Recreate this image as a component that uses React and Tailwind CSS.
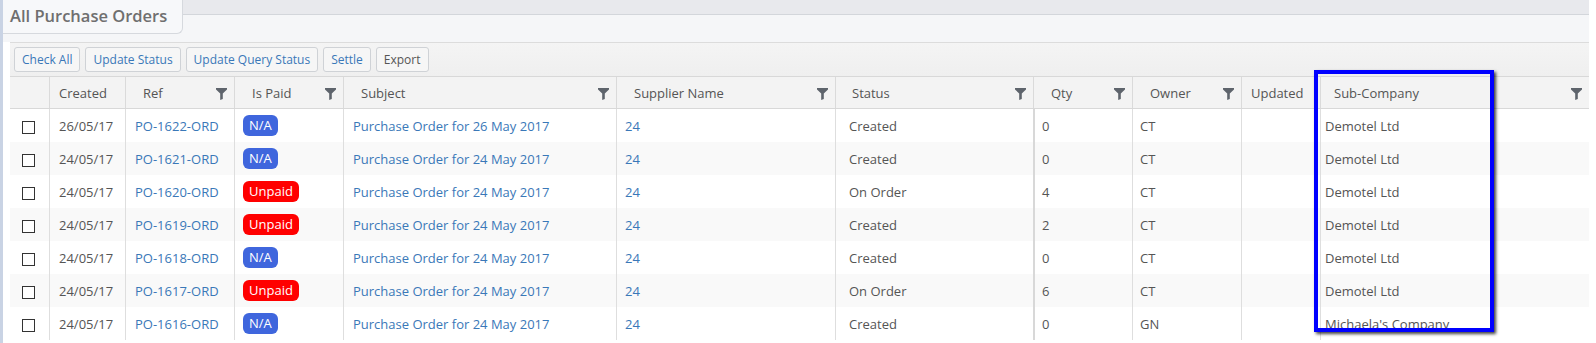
import React from "react";

const FONT = { fontFamily: '"Open Sans", "Noto Sans", Arial, sans-serif' };

function Funnel() {
  return (
    <svg width="11" height="12" viewBox="0 0 11 12" className="shrink-0">
      <path d="M0 0 H11 V1.5 L6.8 5.5 V11 L4.2 12 V5.5 L0 1.5 Z" fill="#5e646c" />
    </svg>
  );
}

const headers = [
  { label: "", pl: "pl-0", filter: false },
  { label: "Created", pl: "pl-[9px]", filter: false },
  { label: "Ref", pl: "pl-[17px]", filter: true },
  { label: "Is Paid", pl: "pl-[17px]", filter: true },
  { label: "Subject", pl: "pl-[17px]", filter: true },
  { label: "Supplier Name", pl: "pl-[17px]", filter: true },
  { label: "Status", pl: "pl-[16px]", filter: true },
  { label: "Qty", pl: "pl-[17px]", filter: true },
  { label: "Owner", pl: "pl-[17px]", filter: true },
  { label: "Updated", pl: "pl-[9px]", filter: false },
  { label: "Sub-Company", pl: "pl-[13px]", filter: true },
];

const rows = [
  ["26/05/17", "PO-1622-ORD", "N/A", "Purchase Order for 26 May 2017", "24", "Created", "0", "CT", "Demotel Ltd"],
  ["24/05/17", "PO-1621-ORD", "N/A", "Purchase Order for 24 May 2017", "24", "Created", "0", "CT", "Demotel Ltd"],
  ["24/05/17", "PO-1620-ORD", "Unpaid", "Purchase Order for 24 May 2017", "24", "On Order", "4", "CT", "Demotel Ltd"],
  ["24/05/17", "PO-1619-ORD", "Unpaid", "Purchase Order for 24 May 2017", "24", "Created", "2", "CT", "Demotel Ltd"],
  ["24/05/17", "PO-1618-ORD", "N/A", "Purchase Order for 24 May 2017", "24", "Created", "0", "CT", "Demotel Ltd"],
  ["24/05/17", "PO-1617-ORD", "Unpaid", "Purchase Order for 24 May 2017", "24", "On Order", "6", "CT", "Demotel Ltd"],
  ["24/05/17", "PO-1616-ORD", "N/A", "Purchase Order for 24 May 2017", "24", "Created", "0", "GN", "Michaela's Company"],
];

const GRID =
  "grid grid-cols-[39px_76px_109px_109px_273px_219px_198px_99px_109px_79px_269px]";

function Btn({ children, dark }) {
  return (
    <button
      className={
        "h-[25px] px-[7px] rounded-[3px] border border-[#cfd2d6] bg-[#f6f6f6] text-[12px] leading-none " +
        (dark ? "text-[#555555]" : "text-[#3a78b8]")
      }
    >
      {children}
    </button>
  );
}

function Badge({ value }) {
  const red = value === "Unpaid";
  return (
    <span
      className={
        "inline-flex items-center h-[21px] px-[6px] rounded-[6px] text-white text-[13px] leading-none " +
        (red ? "bg-[#ff0000]" : "bg-[#3f66dd]")
      }
    >
      {value}
    </span>
  );
}

export default function App() {
  return (
    <div className="relative flex w-[1596px] h-[343px] overflow-hidden bg-white" style={FONT}>
      <div className="w-[3px] shrink-0 bg-[#c9d3e4]" />
      <div className="w-[1586px] shrink-0 flex flex-col">
        {/* title strip */}
        <div className="flex items-start h-[42px] bg-[#f5f6f8]">
          <div className="w-[180px] h-[34px] shrink-0 bg-[#f7f8fa] border-r border-b border-[#d6d9de] rounded-br-[6px] pl-[7px] flex items-center">
            <span className="text-[16.5px] font-semibold text-[#6f6f6f] leading-none">All Purchase Orders</span>
          </div>
          <div className="flex-1 h-[15px] bg-[#e8e9ed] border-b border-[#d3d6db]" />
        </div>
        {/* content */}
        <div className="pl-[7px] flex flex-col">
          <div className="h-[34px] bg-gradient-to-b from-[#f4f4f4] to-[#efefef] border-t border-[#dcdcdc] flex items-center gap-[5px] pl-[4px]">
            <Btn>Check All</Btn>
            <Btn>Update Status</Btn>
            <Btn>Update Query Status</Btn>
            <Btn>Settle</Btn>
            <Btn dark>Export</Btn>
          </div>
          {/* header */}
          <div className={GRID + " h-[33px] bg-[#f3f3f3] border-t border-b border-[#d8d8d8]"}>
            {headers.map((h, i) => (
              <div
                key={i}
                className={
                  "flex items-center justify-between pr-[7px] pt-[2px] text-[13px] text-[#555555] " +
                  h.pl +
                  (i > 0 ? " border-l border-[#dadada]" : "")
                }
              >
                <span>{h.label}</span>
                {h.filter && <Funnel />}
              </div>
            ))}
          </div>
          {/* rows */}
          {rows.map((r, ri) => (
            <div
              key={ri}
              className={GRID + " h-[33px] text-[13px] text-[#555555] " + (ri % 2 === 1 ? "bg-[#f9f9f9]" : "bg-white")}
            >
              <div className="flex items-center pl-[12px] pt-[3px]">
                <span className="w-[13px] h-[13px] border border-[#333333] bg-white" />
              </div>
              <div className="flex items-center pl-[9px] pt-[2px] border-l border-[#dedede]">{r[0]}</div>
              <div className="flex items-center pl-[9px] pt-[2px] border-l border-[#dedede] text-[#3a78b8]">{r[1]}</div>
              <div className="flex items-center pl-[8px] border-l border-[#dedede]">
                <Badge value={r[2]} />
              </div>
              <div className="flex items-center pl-[9px] pt-[2px] border-l border-[#dedede] text-[#3a78b8]">{r[3]}</div>
              <div className="flex items-center pl-[8px] pt-[2px] border-l border-[#dedede] text-[#3a78b8]">{r[4]}</div>
              <div className="flex items-center pl-[13px] pt-[2px] border-l border-[#dedede]">{r[5]}</div>
              <div className="flex items-center pl-[7px] pt-[2px] border-l-2 border-[#d8d8d8]">{r[6]}</div>
              <div className="flex items-center pl-[7px] pt-[2px] border-l border-[#dedede]">{r[7]}</div>
              <div className="flex items-center border-l border-[#dedede]" />
              <div className="flex items-center pl-[4px] pt-[2px] border-l border-[#dedede] whitespace-nowrap">{r[8]}</div>
            </div>
          ))}
        </div>
      </div>
      {/* highlight annotation */}
      <div className="absolute left-[1314px] top-[70px] w-[180px] h-[262px] border-4 border-[#0000ff] shadow-[2px_2px_3px_rgba(0,0,0,0.75)] pointer-events-none" />
    </div>
  );
}
